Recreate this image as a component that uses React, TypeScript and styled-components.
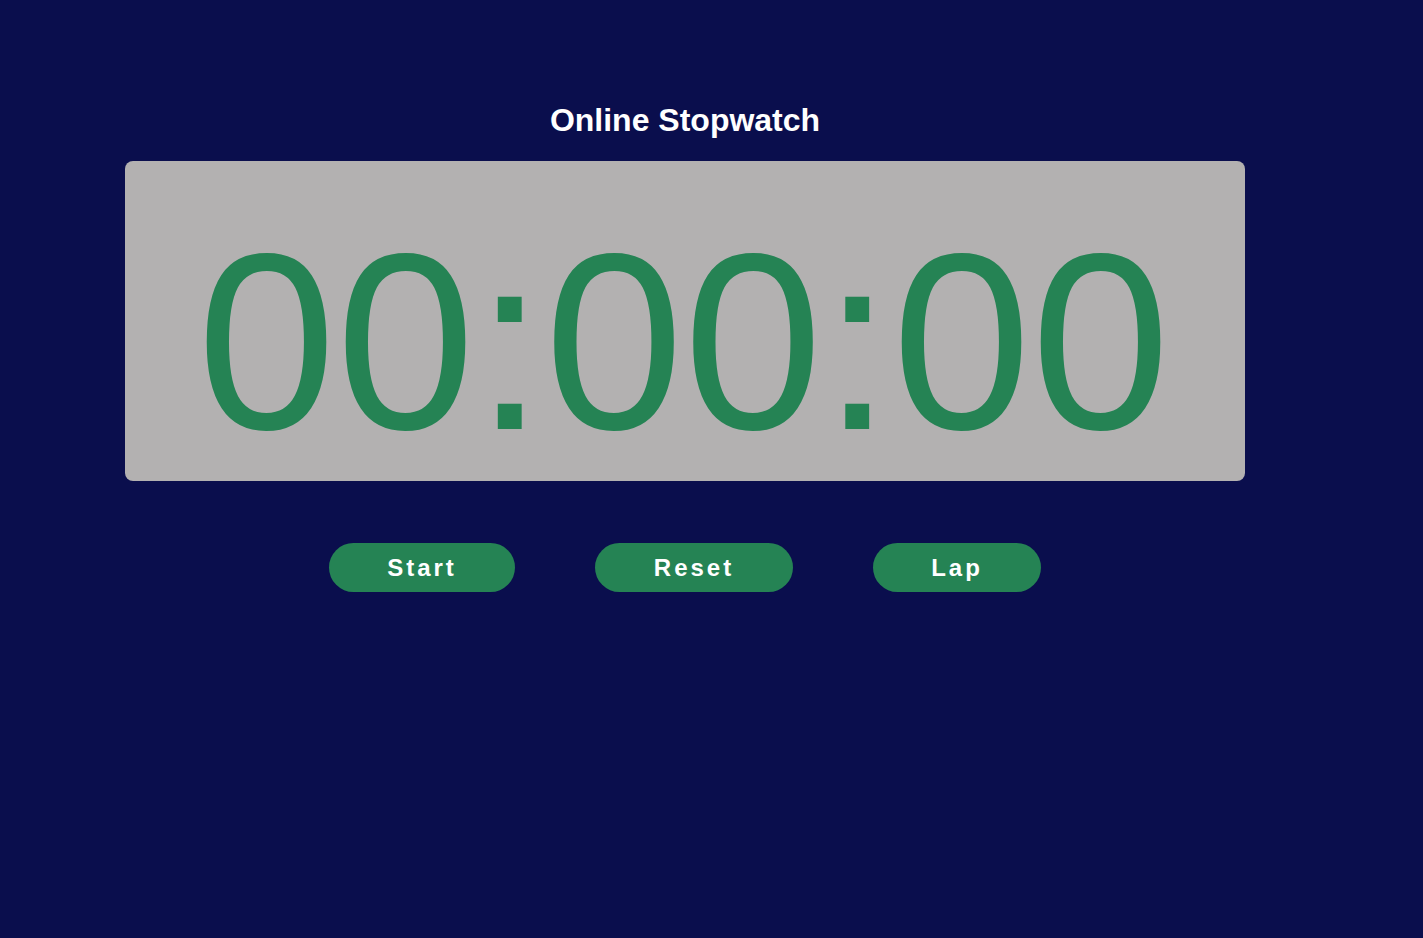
import React from "react";
import styled, { createGlobalStyle } from "styled-components";

const Global = createGlobalStyle`
  html, body { margin: 0; padding: 0; background: #0a0e4d; }
  body { font-family: "Liberation Sans", Arial, sans-serif; min-height: 938px; }
`;

const Page = styled.div`
  width: 1120px;
  margin-left: 125px;
  padding-top: 102px;
  display: flex;
  flex-direction: column;
  align-items: center;
`;

const Title = styled.h1`
  margin: 0 0 22px;
  font-size: 32px;
  font-weight: 700;
  color: #ffffff;
  line-height: normal;
`;

const Display = styled.div`
  box-sizing: border-box;
  width: 1120px;
  height: 320px;
  padding: 57px 3px 0 0;
  background: #b3b1b1;
  border-radius: 8px;
  text-align: center;
  color: #258354;
  font-size: 250px;
  line-height: 250px;
`;

const Controls = styled.div`
  margin-top: 62px;
  display: flex;
  gap: 80px;
`;

const Button = styled.button`
  height: 49px;
  padding: 0 58.5px;
  border: none;
  border-radius: 25px;
  background: #258354;
  color: #ffffff;
  font-family: "Liberation Sans", Arial, sans-serif;
  font-size: 24px;
  font-weight: 700;
  letter-spacing: 3px;
  cursor: pointer;
`;

export default function App() {
  return (
    <>
      <Global />
      <Page>
        <Title>Online Stopwatch</Title>
        <Display>00:00:00</Display>
        <Controls>
          <Button>Start</Button>
          <Button>Reset</Button>
          <Button>Lap</Button>
        </Controls>
      </Page>
    </>
  );
}
